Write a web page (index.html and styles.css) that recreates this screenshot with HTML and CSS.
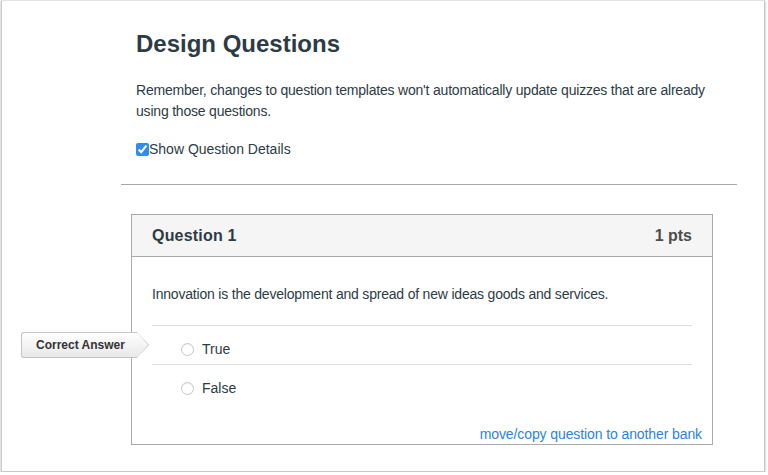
FILE: index.html
```html
<!DOCTYPE html>
<html lang="en">
<head>
<meta charset="utf-8">
<title>Design Questions</title>
<link rel="stylesheet" href="styles.css">
</head>
<body>
<div class="window">
  <div class="main">
    <div class="intro">
      <h1 class="title">Design Questions</h1>
      <p class="note">Remember, changes to question templates won't automatically update quizzes that are already using those questions.</p>
      <label class="details"><input type="checkbox" class="check" checked>Show Question Details</label>
    </div>
    <div class="rule"></div>
    <div class="card">
      <div class="card-head">
        <span class="q-name">Question 1</span>
        <span class="q-pts">1 pts</span>
      </div>
      <div class="card-body">
        <div class="q-text">Innovation is the development and spread of new ideas goods and services.</div>
        <div class="answers">
          <div class="answer">
            <span class="badge">Correct Answer</span>
            <span class="radio"></span><span class="a-text">True</span>
          </div>
          <div class="answer">
            <span class="radio"></span><span class="a-text">False</span>
          </div>
        </div>
        <div class="link-row"><a class="move-link" href="#">move/copy question to another bank</a></div>
      </div>
    </div>
  </div>
</div>
</body>
</html>
```

FILE: styles.css
```css
html, body {
  margin: 0;
  padding: 0;
  background: #ffffff;
}
body {
  font-family: "Liberation Sans", Arial, sans-serif;
  color: #2d3b45;
}
.window {
  box-sizing: border-box;
  width: 764px;
  height: 472px;
  margin-left: 1px;
  border: 1px solid #c9c9c9;
  border-top-color: #e2e2e2;
  box-shadow: 0 1px 2px rgba(0, 0, 0, 0.35);
  background: #ffffff;
  position: relative;
}
.main {
  margin-left: 119px;
  width: 616px;
}
.intro {
  padding: 28px 15px 0;
}
.title {
  margin: 0;
  font-size: 24px;
  line-height: 30px;
  font-weight: bold;
  color: #2d3b45;
}
.note {
  margin: 21px 0 0;
  font-size: 14px;
  line-height: 21px;
  letter-spacing: -0.2px;
}
.details {
  display: flex;
  align-items: center;
  margin-top: 17px;
  font-size: 14px;
  line-height: 20px;
}
.check {
  margin: 0;
  width: 13px;
  height: 13px;
  accent-color: #2f8cf6;
}
.rule {
  margin-top: 25px;
  border-top: 1px solid #a8a8a8;
}
.card {
  box-sizing: border-box;
  width: 582px;
  margin: 29px 0 0 10px;
  border: 1px solid #aaaaaa;
}
.card-head {
  height: 41px;
  padding: 0 20px;
  display: flex;
  align-items: center;
  justify-content: space-between;
  background: #f5f5f5;
  border-bottom: 1px solid #aaaaaa;
  font-size: 16px;
  font-weight: bold;
}
.q-name {
  letter-spacing: 0.2px;
}
.q-pts {
  color: #4d4d4d;
}
.card-body {
  padding: 27px 0 0 20px;
}
.q-text {
  font-size: 14px;
  line-height: 20px;
  letter-spacing: -0.2px;
}
.answers {
  margin: 21px 20px 0 0;
}
.answer {
  position: relative;
  height: 38px;
  border-top: 1px solid #dddddd;
  display: flex;
  align-items: flex-start;
}
.radio {
  box-sizing: border-box;
  width: 13px;
  height: 13px;
  margin: 17px 8px 0 29px;
  border: 1px solid #c6c6c6;
  border-radius: 50%;
  background: #ffffff;
  box-shadow: inset 0 1px 1px rgba(0, 0, 0, 0.06);
}
.a-text {
  margin-top: 13px;
  font-size: 14px;
  line-height: 20px;
}
.badge {
  position: absolute;
  left: -131px;
  top: 6px;
  box-sizing: border-box;
  width: 116px;
  height: 26px;
  padding-left: 14px;
  font-size: 12px;
  line-height: 24px;
  font-weight: bold;
  color: #333333;
  background: linear-gradient(#ffffff, #e8e8e8);
  border: 1px solid #c4c4c4;
  border-right: none;
  border-radius: 3px 0 0 3px;
}
.badge::after {
  content: "";
  position: absolute;
  right: -11px;
  top: -1px;
  width: 11px;
  height: 26px;
  background: linear-gradient(#ffffff, #e8e8e8);
  clip-path: polygon(0 0, 0 100%, 100% 50%);
}
.badge::before {
  content: "";
  position: absolute;
  right: -12px;
  top: -1px;
  width: 12px;
  height: 26px;
  background: #c4c4c4;
  clip-path: polygon(0 0, 0 100%, 100% 50%);
}
.link-row {
  display: flex;
  justify-content: flex-end;
  margin-top: 21px;
  padding-right: 10px;
  font-size: 14px;
  line-height: 20px;
  letter-spacing: -0.1px;
}
.move-link {
  color: #2a84e0;
  text-decoration: none;
}
```
